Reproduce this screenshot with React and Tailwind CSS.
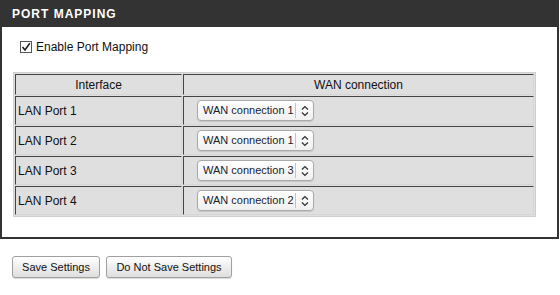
import React from 'react';

const ports = [
  { name: 'LAN Port 1', wan: 'WAN connection 1' },
  { name: 'LAN Port 2', wan: 'WAN connection 1' },
  { name: 'LAN Port 3', wan: 'WAN connection 3' },
  { name: 'LAN Port 4', wan: 'WAN connection 2' },
];

const cell =
  'border border-t-[#444] border-l-[#444] border-b-[#d6d6d6] border-r-[#d6d6d6] p-0';

const Select = ({ value }) => (
  <div className="flex h-[21px] w-[117px] items-center rounded-[4px] border border-[#aaa] bg-gradient-to-b from-white to-[#f0f0f0] shadow-[0_1px_1px_rgba(0,0,0,0.12)]">
    <span className="w-[98px] whitespace-nowrap pl-[5px] text-[11px] leading-none text-[#1c1c2c]">{value}</span>
    <span className="h-[15px] w-px bg-[#c4c4c4]" />
    <svg width="16" height="14" viewBox="0 0 16 14" className="ml-px">
      <path d="M5 5.5 L8 2.5 L11 5.5" fill="none" stroke="#333" strokeWidth="1.3" />
      <path d="M5 8.5 L8 11.5 L11 8.5" fill="none" stroke="#333" strokeWidth="1.3" />
    </svg>
  </div>
);

const Button = ({ children, className = '' }) => (
  <button
    type="button"
    className={`h-[22px] whitespace-nowrap rounded-[3px] border border-[#a0a0a0] bg-gradient-to-b from-white to-[#dedede] text-[11px] leading-none text-[#111] shadow-[0_1px_1px_rgba(0,0,0,0.15)] ${className}`}
  >
    {children}
  </button>
);

export default function App() {
  return (
    <div className="h-[295px] w-[560px] bg-white font-['Liberation_Sans',Arial,sans-serif] text-[12px] text-[#111]">
      <div className="w-[559px]">
        <div className="flex h-[27px] items-center bg-[#333] pl-[12px] text-[12px] font-bold tracking-[1px] text-white">
          PORT MAPPING
        </div>
        <div className="h-[212px] border-x-2 border-b-2 border-[#333] pl-[11px] pt-[14px]">
          <label className="flex items-center gap-[4px] pl-[7px]">
            <span className="flex h-[12px] w-[12px] items-center justify-center border border-[#555] bg-white">
              <svg width="10" height="10" viewBox="0 0 10 10">
                <path d="M1.5 5 L4 8 L8.8 1.2" fill="none" stroke="#222" strokeWidth="1.6" />
              </svg>
            </span>
            <span className="leading-none">Enable Port Mapping</span>
          </label>
          <table className="mt-[19px] w-[523px] border-separate border-spacing-[1px] border border-[#cfcfcf] bg-[#dfdfdf]">
            <thead>
              <tr>
                <th className={`${cell} h-[21px] w-[167px] font-normal`}>Interface</th>
                <th className={`${cell} font-normal`}>WAN connection</th>
              </tr>
            </thead>
            <tbody>
              {ports.map((p) => (
                <tr key={p.name}>
                  <td className={`${cell} h-[29px] pl-[2px]`}>{p.name}</td>
                  <td className={`${cell} pl-[13px]`}>
                    <Select value={p.wan} />
                  </td>
                </tr>
              ))}
            </tbody>
          </table>
        </div>
      </div>
      <div className="flex gap-[6px] pl-[12px] pt-[17px]">
        <Button className="w-[88px]">Save Settings</Button>
        <Button className="w-[126px]">Do Not Save Settings</Button>
      </div>
    </div>
  );
}
